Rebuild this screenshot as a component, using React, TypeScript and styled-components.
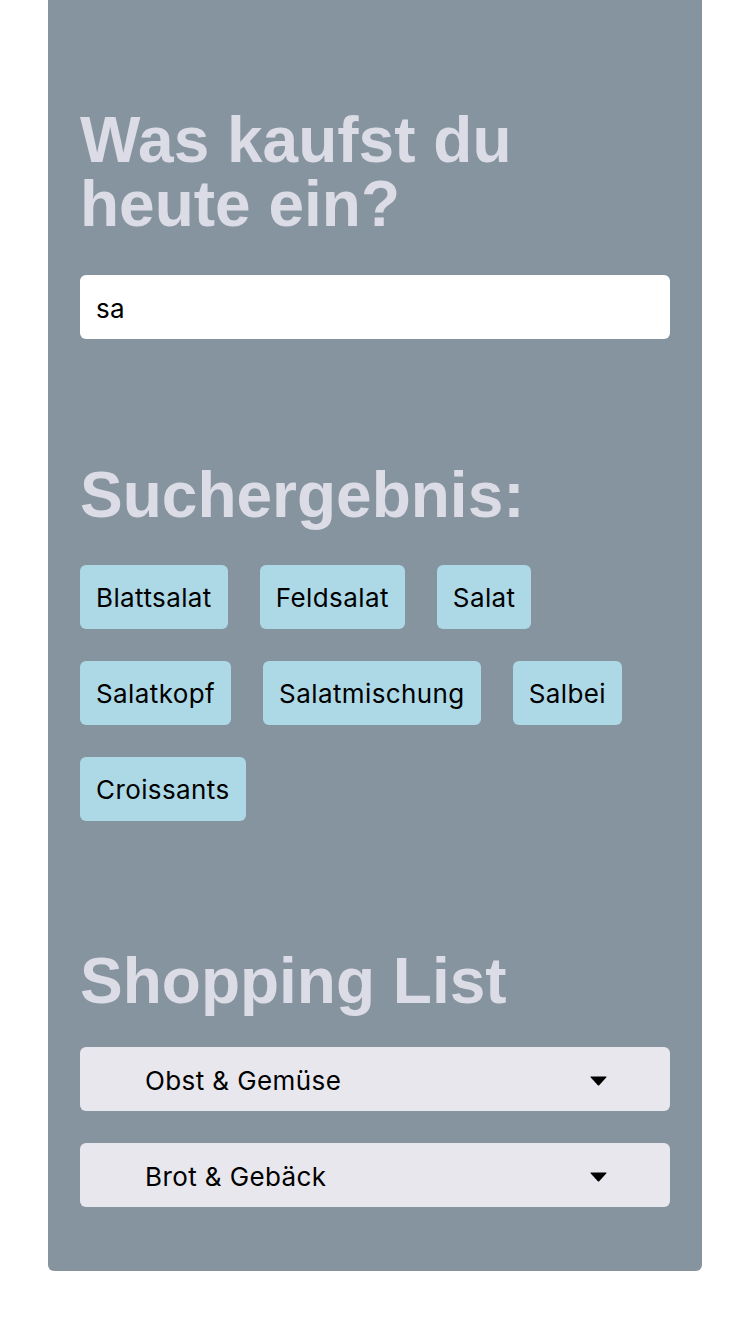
import React from "react";
import styled, { createGlobalStyle } from "styled-components";

const GlobalStyle = createGlobalStyle`
  html, body { margin: 0; padding: 0; background: #ffffff; }
  * { box-sizing: border-box; }
`;

const Page = styled.div`
  padding: 0 48px;
`;

const Panel = styled.main`
  background: #8694a0;
  border-radius: 0 0 6px 6px;
  padding: 108px 32px 64px;
  display: flex;
  flex-direction: column;
`;

const Heading = styled.h1<{ $mt?: number; $mb: number }>`
  margin: ${(p) => p.$mt ?? 0}px 0 ${(p) => p.$mb}px;
  font-family: "Liberation Sans", Arial, Helvetica, sans-serif;
  font-weight: 700;
  font-size: 64px;
  line-height: 64px;
  color: #dcdce6;
`;

const SearchInput = styled.input`
  display: block;
  width: 100%;
  height: 64px;
  border: none;
  outline: none;
  border-radius: 6px;
  background: #ffffff;
  padding: 2px 16px 0;
  font-family: Inter, "Noto Sans", sans-serif;
  font-size: 26px;
  letter-spacing: 0.4px;
  color: #000000;
  margin-bottom: 124px;
`;

const ChipWrap = styled.div`
  display: flex;
  flex-wrap: wrap;
  gap: 32px;
`;

const Chip = styled.button`
  height: 64px;
  border: none;
  border-radius: 6px;
  background: #add8e6;
  padding: 2px 16px 0;
  font-family: Inter, "Noto Sans", sans-serif;
  font-size: 26px;
  letter-spacing: 0.4px;
  line-height: 62px;
  color: #000000;
  cursor: pointer;
`;

const AccordionList = styled.div`
  display: flex;
  flex-direction: column;
  gap: 32px;
`;

const AccordionRow = styled.button`
  height: 64px;
  width: 100%;
  border: none;
  border-radius: 6px;
  background: #e8e7ed;
  padding: 4px 63px 0 65px;
  display: flex;
  align-items: center;
  justify-content: space-between;
  font-family: Inter, "Noto Sans", sans-serif;
  font-size: 26px;
  letter-spacing: 0.4px;
  line-height: 60px;
  color: #000000;
  cursor: pointer;
`;

const Caret = () => (
  <svg width="17" height="10" viewBox="0 0 17 10" aria-hidden="true">
    <path d="M1 0.5 H16 Q17 0.5 16.2 1.4 L9.2 9.2 Q8.5 9.9 7.8 9.2 L0.8 1.4 Q0 0.5 1 0.5 Z" fill="#000" />
  </svg>
);

const results = [
  "Blattsalat",
  "Feldsalat",
  "Salat",
  "Salatkopf",
  "Salatmischung",
  "Salbei",
  "Croissants",
];

const categories = ["Obst & Gemüse", "Brot & Gebäck"];

export default function App() {
  return (
    <>
      <GlobalStyle />
      <Page>
        <Panel>
          <Heading $mb={39}>
            Was kaufst du
            <br />
            heute ein?
          </Heading>
          <SearchInput defaultValue="sa" />
          <Heading as="h2" $mb={38}>
            Suchergebnis:
          </Heading>
          <ChipWrap>
            {results.map((r) => (
              <Chip key={r}>{r}</Chip>
            ))}
          </ChipWrap>
          <Heading as="h2" $mt={128} $mb={34}>
            Shopping List
          </Heading>
          <AccordionList>
            {categories.map((c) => (
              <AccordionRow key={c}>
                <span>{c}</span>
                <Caret />
              </AccordionRow>
            ))}
          </AccordionList>
        </Panel>
      </Page>
    </>
  );
}
